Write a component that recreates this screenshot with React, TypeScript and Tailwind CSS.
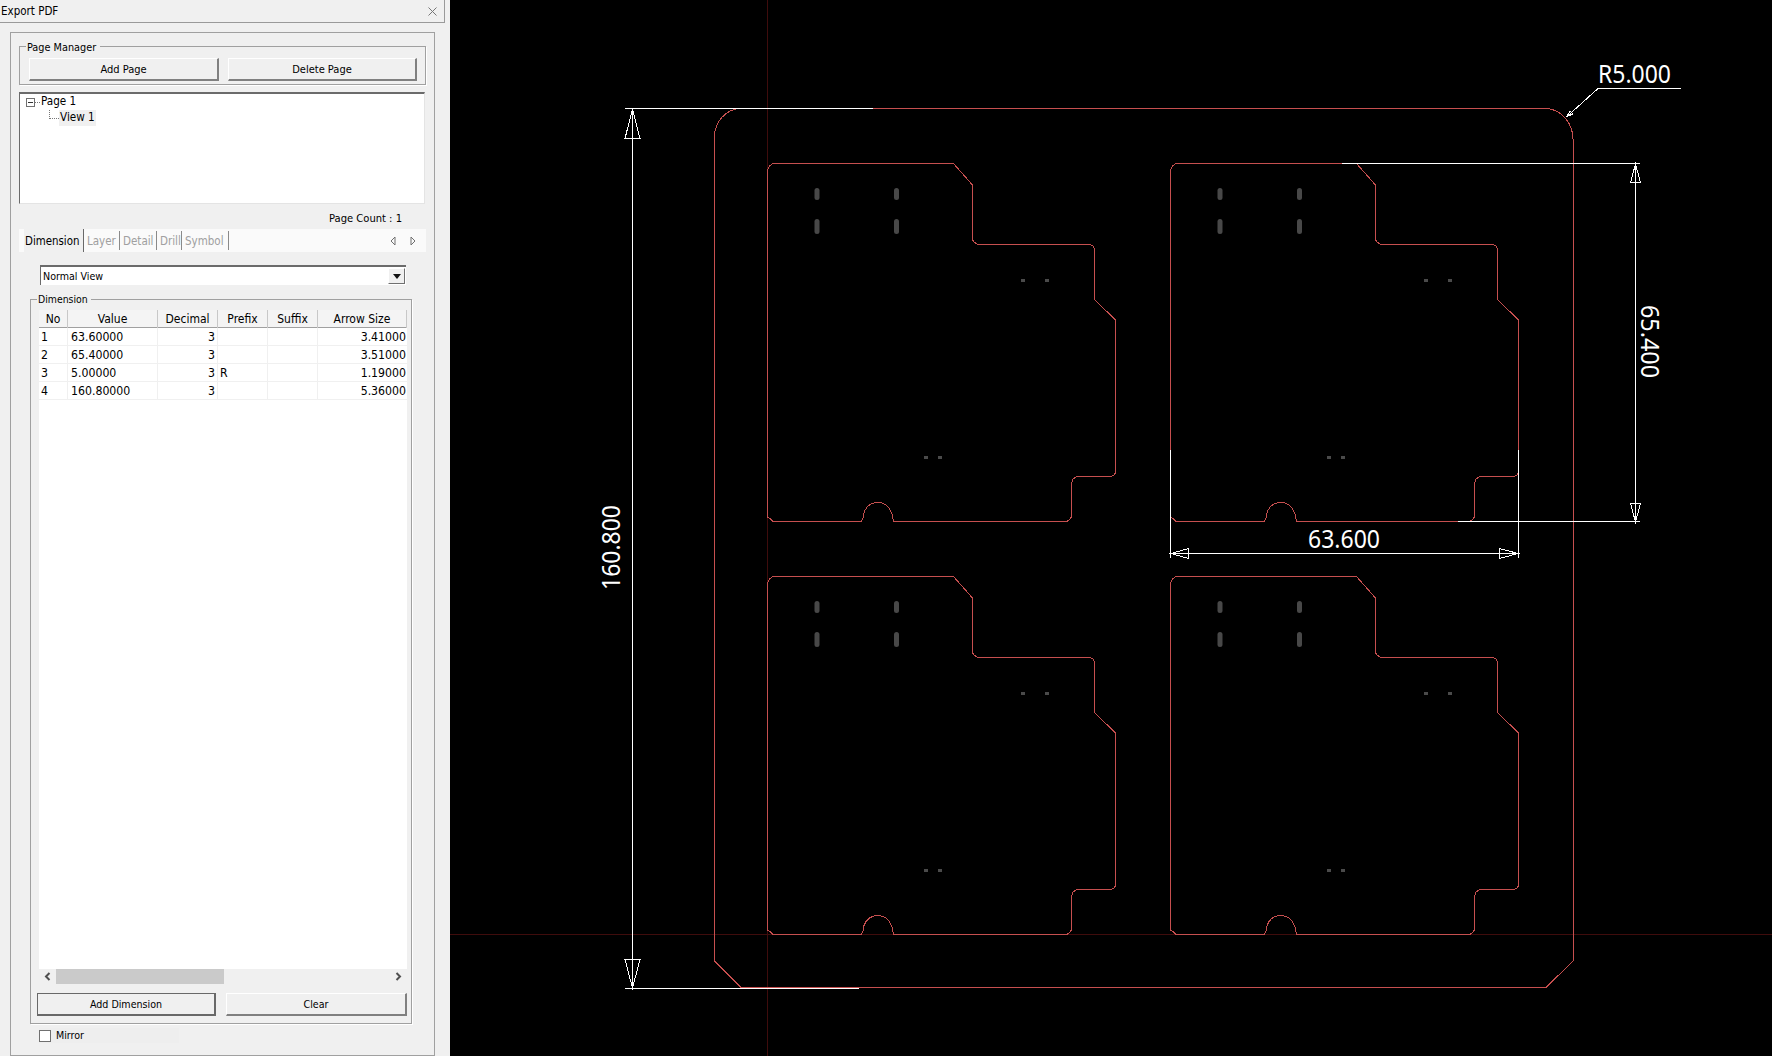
import React from "react";

const PCB =
  "M767.5 170 L769.5 166 L773 163.5 L953.5 163.5 L972.5 185 L972.5 240 L974 242 L978 244.5 L1090 244.5 L1093 246 L1094.5 249 L1094.5 299.5 L1115.5 320 L1115.5 473 L1114 475 L1111 476.5 L1077 476.5 L1073 479 L1071.5 484 L1071.5 517 L1070 519 L1067 521.5 L894 521.5 L892.5 518 L892 514 Q888 502.5 878 502.5 Q867 502.5 863.5 514 L863 518 L861.5 521.5 L773 521.5 L770 518.5 L767.5 517 Z";

const BOARD =
  "M714.5 137 A27 28.5 0 0 1 741 108.5 L1545 108.5 A28 31 0 0 1 1573 140 L1573 961 L1546 987.5 L741 987.5 L714.5 961 Z";

const rows = [
  ["1", "63.60000", "3", "", "", "3.41000"],
  ["2", "65.40000", "3", "", "", "3.51000"],
  ["3", "5.00000", "3", "R", "", "1.19000"],
  ["4", "160.80000", "3", "", "", "5.36000"],
];

const uiFont = "font-['DejaVu_Sans_Condensed','DejaVu_Sans',sans-serif] text-[10.6px] text-black";
const rowGrid = "grid grid-cols-[29px_90px_60px_50px_50px_89px] w-[368px]";
const button =
  "flex items-center justify-center h-[23px] pt-[2px] text-[11px] bg-[#f0f0f0] border-t border-l border-t-white border-l-white border-r-2 border-b-2 border-r-[#808080] border-b-[#808080]";

function Pcb({ dx, dy }: { dx: number; dy: number }) {
  const d = [817, 896.5];
  return (
    <g transform={`translate(${dx} ${dy})`}>
      <path d={PCB} fill="none" stroke="#c64f4f" strokeWidth="1" />
      {d.map((x) => (
        <g key={x} fill="#484848" stroke="none" shapeRendering="auto">
          <rect x={x - 2.5} y={188} width="5" height="12" rx="2.5" />
          <rect x={x - 2.5} y={219} width="5" height="15" rx="2.5" />
        </g>
      ))}
      <g fill="#4a4a4a" stroke="none">
        <rect x="1021" y="279" width="4" height="3" />
        <rect x="1045" y="279" width="4" height="3" />
        <rect x="924" y="456" width="4" height="3" />
        <rect x="938" y="456" width="4" height="3" />
      </g>
    </g>
  );
}

function Drawing() {
  return (
    <svg
      width="1322"
      height="1056"
      viewBox="450 0 1322 1056"
      shapeRendering="crispEdges"
      className="block shrink-0"
    >
      <line x1="767.5" y1="0" x2="767.5" y2="1056" stroke="#3f0c0c" />
      <line x1="450" y1="934.5" x2="1772" y2="934.5" stroke="#3f0c0c" />
      <path d={BOARD} fill="none" stroke="#c64f4f" />
      <Pcb dx={0} dy={0} />
      <Pcb dx={403} dy={0} />
      <Pcb dx={0} dy={413} />
      <Pcb dx={403} dy={413} />
      <g fill="none" stroke="#fff" strokeWidth="1">
        {/* 160.800 */}
        <path d="M625 108.5 H873" />
        <path d="M625 988.5 H859" />
        <path d="M632.5 108.5 V988" />
        <path d="M632.5 109 L640 138.5 H625 Z" />
        <path d="M632.5 988 L640 959.5 H625 Z" />
        {/* 65.400 */}
        <path d="M1342 163.5 H1640" />
        <path d="M1458 521.5 H1640" />
        <path d="M1635.5 163.5 V522" />
        <path d="M1635.5 164 L1640.5 182.5 H1630.5 Z" />
        <path d="M1635.5 522 L1640.5 503.5 H1630.5 Z" />
        {/* 63.600 */}
        <path d="M1170.5 450 V558" />
        <path d="M1518.5 450 V558" />
        <path d="M1170.5 553.5 H1518.5" />
        <path d="M1171 553.5 L1188.5 548.5 V558.5 Z" />
        <path d="M1518 553.5 L1499.5 548.5 V558.5 Z" />
        {/* R5.000 */}
        <path d="M1681 88.5 H1598 L1567 116.5" />
        <path d="M1567 116.5 L1570 111 L1573 114 Z" />
      </g>
      <g
        fill="#fff"
        stroke="none"
        fontFamily="'Noto Sans', sans-serif"
        fontSize="25"
        shapeRendering="auto"
      >
        <text x="1598" y="83" textLength="73" lengthAdjust="spacingAndGlyphs">R5.000</text>
        <text x="1308" y="548" textLength="72" lengthAdjust="spacingAndGlyphs">63.600</text>
        <text
          transform="translate(1641 305) rotate(90)"
          textLength="73"
          lengthAdjust="spacingAndGlyphs"
        >
          65.400
        </text>
        <text
          transform="translate(620 590) rotate(-90)"
          textLength="85"
          lengthAdjust="spacingAndGlyphs"
        >
          160.800
        </text>
      </g>
    </svg>
  );
}

function Tabs() {
  const others: [string, string][] = [
    ["Layer", "w-[36px]"],
    ["Detail", "w-[37px]"],
    ["Drill", "w-[25px]"],
    ["Symbol", "w-[47px]"],
  ];
  return (
    <div className="flex items-center h-[23px] w-[407px] bg-[#fafafa] pl-[5px] pr-[10px]">
      <div className="flex items-center h-full w-[60px] bg-[#f0f0f0] pl-[1px] pt-[2px] border-r border-r-[#696969] text-[11.4px]">
        Dimension
      </div>
      {others.map(([t, w]) => (
        <div
          key={t}
          className={`flex items-center h-[19px] pl-[3px] pt-[2px] text-[#a0a0a0] text-[11.5px] border-r border-r-[#8a8a8a] ${w}`}
        >
          {t}
        </div>
      ))}
      <div className="ml-auto flex items-center gap-[14px]">
        <svg width="6" height="10" viewBox="0 0 6 10" fill="none" stroke="#707070">
          <path d="M5 1 L1 5 L5 9 Z" />
        </svg>
        <svg width="6" height="10" viewBox="0 0 6 10" fill="none" stroke="#707070">
          <path d="M1 1 L5 5 L1 9 Z" />
        </svg>
      </div>
    </div>
  );
}

function Panel() {
  return (
    <div className={`w-[450px] h-[1056px] shrink-0 bg-[#f0f0f0] ${uiFont}`}>
      <div className="flex items-center justify-between w-[445px] h-[23px] pt-[1px] border-b border-r border-[#9a9a9a] pl-[1px] pr-[7px] text-[11.5px]">
        <span>Export PDF</span>
        <svg width="9" height="9" viewBox="0 0 9 9" stroke="#777" fill="none">
          <path d="M0.5 0.5 L8.5 8.5 M8.5 0.5 L0.5 8.5" />
        </svg>
      </div>
      <div className="ml-[10px] mt-[9px] w-[425px] h-[1024px] border border-[#a0a0a0] pl-[8px] pt-[13px]">
        {/* Page manager */}
        <div className="relative w-[407px] h-[39px] border border-[#a0a0a0] pl-[9px] pt-[11px] flex gap-[9px] shadow-[1px_1px_0_#fff]">
          <span className="absolute left-[6px] -top-[7px] bg-[#f0f0f0] px-[1px] pr-[4px] text-[10.8px]">
            Page Manager
          </span>
          <div className={`${button} w-[190px]`}>Add Page</div>
          <div className={`${button} w-[189px]`}>Delete Page</div>
        </div>

        {/* Tree */}
        <div className="mt-[7px] w-[406px] h-[112px] bg-white border-t-2 border-l border-t-[#6b6b6b] border-l-[#6b6b6b] border-r border-b border-r-[#e4e4e4] border-b-[#e4e4e4] pl-[6px] text-[11.6px]">
          <div className="flex items-center h-[16px]">
            <span className="flex items-center justify-center w-[9px] h-[9px] border border-[#707070]">
              <span className="block w-[5px] h-px bg-[#333]" />
            </span>
            <span className="w-[5px] border-t border-dotted border-[#777]" />
            <span className="pl-[1px]">Page 1</span>
          </div>
          <div className="flex items-center h-[16px] pl-[23px]">
            <span className="w-[10px] h-[9px] -mt-[8px] border-l border-b border-dotted border-[#777]" />
            <span className="px-[1px] h-[16px] flex items-center bg-[#f0f0f0]">View 1</span>
          </div>
        </div>

        <div className="flex items-center justify-end h-[25px] w-[407px] pr-[24px] pt-[6px] text-[11.1px]">
          Page Count : 1
        </div>

        <Tabs />

        {/* Combo */}
        <div className="ml-[21px] mt-[13px] flex items-center justify-between w-[366px] h-[20px] bg-white border-t-2 border-l border-t-[#6b6b6b] border-l-[#6b6b6b] pl-[2px] pr-[1px] pt-[2px]">
          <span>Normal View</span>
          <div className="flex items-center justify-center w-[17px] h-[16px] -mt-[2px] bg-[#f0f0f0] border-t border-l border-white border-r border-b border-r-[#707070] border-b-[#707070]">
            <svg width="8" height="5" viewBox="0 0 8 5" fill="#111">
              <path d="M0 0 H8 L4 5 Z" />
            </svg>
          </div>
        </div>

        {/* Dimension group */}
        <div className="relative ml-[11px] mt-[14px] w-[382px] h-[725px] border border-[#a0a0a0] shadow-[1px_1px_0_#fff] pl-[8px] pt-[10px]">
          <span className="absolute left-[6px] -top-[8px] bg-[#f0f0f0] px-[1px] pr-[3px] text-[10.4px]">
            Dimension
          </span>
          <div className="w-[368px] h-[659px] bg-white">
            <div className={`${rowGrid} h-[18px] bg-[#f4f4f4] border-b border-b-[#a0a0a0]`}>
              {["No", "Value", "Decimal", "Prefix", "Suffix", "Arrow Size"].map((h) => (
                <div key={h} className="flex items-center justify-center border-r border-r-[#c8c8c8] text-[12px]">
                  {h}
                </div>
              ))}
            </div>
            {rows.map((r) => (
              <div key={r[0]} className={`${rowGrid} h-[18px] border-b border-b-[#f0f0f0] text-[12.2px]`}>
                <div className="flex items-center pl-[2px] border-r border-r-[#f0f0f0]">{r[0]}</div>
                <div className="flex items-center pl-[3px] border-r border-r-[#f0f0f0]">{r[1]}</div>
                <div className="flex items-center justify-end pr-[2px] border-r border-r-[#f0f0f0]">{r[2]}</div>
                <div className="flex items-center pl-[2px] border-r border-r-[#f0f0f0]">{r[3]}</div>
                <div className="flex items-center border-r border-r-[#f0f0f0]">{r[4]}</div>
                <div className="flex items-center justify-end pr-[1px]">{r[5]}</div>
              </div>
            ))}
          </div>
          {/* Scrollbar */}
          <div className="flex items-center justify-between w-[368px] h-[15px] bg-[#f0f0f0] pl-[5px] pr-[5px]">
            <svg width="7" height="9" viewBox="0 0 7 9" fill="none" stroke="#505050" strokeWidth="2">
              <path d="M5.5 1 L2 4.5 L5.5 8" />
            </svg>
            <div className="w-[168px] h-[15px] bg-[#cacaca] mr-auto ml-[5px]" />
            <svg width="7" height="9" viewBox="0 0 7 9" fill="none" stroke="#505050" strokeWidth="2">
              <path d="M1.5 1 L5 4.5 L1.5 8" />
            </svg>
          </div>
          <div className="flex gap-[10px] -ml-[2px] mt-[9px]">
            <div className="flex items-center justify-center w-[179px] h-[23px] pt-[2px] bg-[#f0f0f0] border border-[#696969] border-b-2 border-r-2">
              Add Dimension
            </div>
            <div className={`${button} w-[181px] !text-[10.6px]`}>Clear</div>
          </div>
        </div>

        {/* Mirror */}
        <div className="ml-[20px] mt-[4px] flex items-center gap-[5px] w-[140px] h-[15px] bg-[#eeeeee]">
          <span className="w-[12px] h-[12px] bg-white border border-[#707070]" />
          <span>Mirror</span>
        </div>
      </div>
    </div>
  );
}

export default function App() {
  return (
    <div className="flex w-[1772px] h-[1056px] overflow-hidden bg-black">
      <Panel />
      <Drawing />
    </div>
  );
}
